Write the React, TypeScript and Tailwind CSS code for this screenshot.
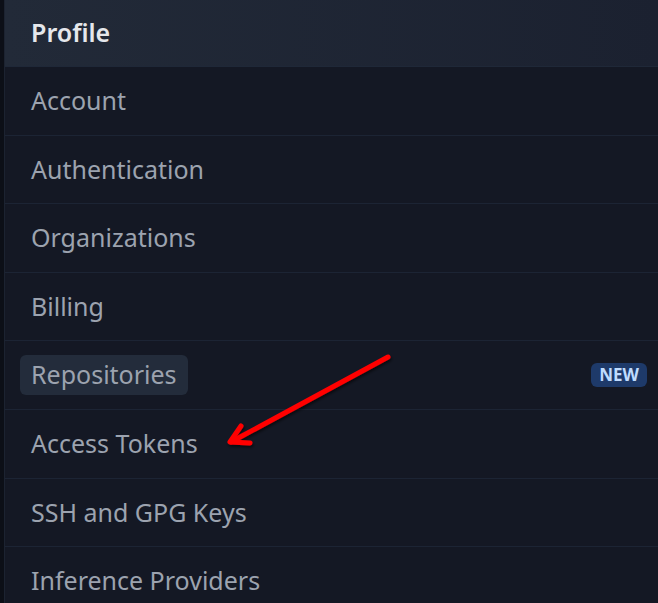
const items = [
  'Account',
  'Authentication',
  'Organizations',
  'Billing',
  'Repositories',
  'Access Tokens',
  'SSH and GPG Keys',
  'Inference Providers',
]

function Arrow() {
  return (
    <svg className="absolute left-0 top-0 pointer-events-none" width="658" height="603" viewBox="0 0 658 603">
      <defs>
        <filter id="sh" x="-20%" y="-20%" width="140%" height="140%">
          <feDropShadow dx="1" dy="2" stdDeviation="1.5" floodColor="#000" floodOpacity="0.6" />
        </filter>
      </defs>
      <g filter="url(#sh)" stroke="#ff0000" strokeWidth="5" strokeLinecap="round" strokeLinejoin="round" fill="none">
        <path d="M388 357 L231 442" />
        <path d="M241 426 L230 442 L250 443" />
      </g>
    </svg>
  )
}

export default function App() {
  return (
    <div className="relative w-[658px] h-[603px] overflow-hidden bg-[#0c0f17] flex" style={{ fontFamily: '"Noto Sans", "Open Sans", sans-serif' }}>
      <div className="w-[4px] shrink-0" />
      <div className="flex-1 flex flex-col bg-[#141824] border-l border-[#1c2331]">
        <div className="h-[67px] shrink-0 flex items-center px-[26px] bg-gradient-to-r from-[#222a38] to-[#1b2130] border-b border-[#1f2838]">
          <span className="text-[25px] font-semibold text-[#e5e7eb]">Profile</span>
        </div>
        {items.map((label) => (
          <div key={label} className="h-[68.6px] shrink-0 flex items-center justify-between px-[15px] border-b border-[#1c2434]">
            {label === 'Repositories' ? (
              <span className="px-[11px] py-[1px] rounded-[6px] bg-[#232c3b] text-[25px] text-[#9ca3af]">{label}</span>
            ) : (
              <span className="px-[11px] text-[25px] text-[#9ca3af]">{label}</span>
            )}
            {label === 'Repositories' && (
              <span className="mr-[-4px] px-[8px] rounded-[6px] bg-[#1e3a6a] text-[17px] font-bold text-[#bfdbfe] leading-[24px]">NEW</span>
            )}
          </div>
        ))}
      </div>
      <Arrow />
    </div>
  )
}
